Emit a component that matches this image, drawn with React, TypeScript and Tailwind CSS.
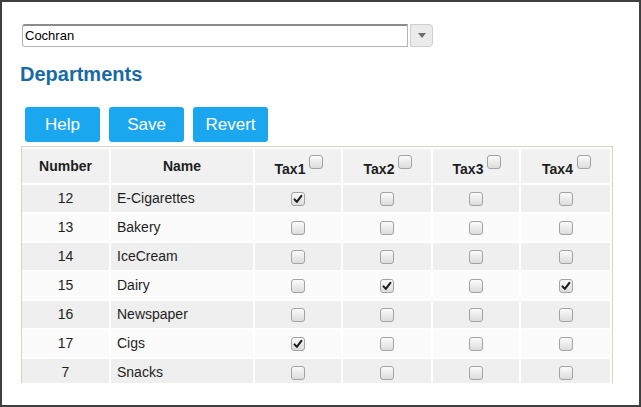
import React from 'react'

type Dept = { num: number; name: string; tax: boolean[] }

const depts: Dept[] = [
    { num: 12, name: 'E-Cigarettes', tax: [true, false, false, false] },
    { num: 13, name: 'Bakery', tax: [false, false, false, false] },
    { num: 14, name: 'IceCream', tax: [false, false, false, false] },
    { num: 15, name: 'Dairy', tax: [false, true, false, true] },
    { num: 16, name: 'Newspaper', tax: [false, false, false, false] },
    { num: 17, name: 'Cigs', tax: [true, false, false, false] },
    { num: 7, name: 'Snacks', tax: [false, false, false, false] },
]

function Check({ checked }: { checked?: boolean }) {
    return (
        <span className="inline-flex w-[14px] h-[14px] shrink-0 items-center justify-center rounded-[3px] border border-[#a3a3a3] bg-gradient-to-b from-[#fbfbfb] to-[#dcdcdc]">
            {checked && (
                <svg width="10" height="10" viewBox="0 0 10 10">
                    <path d="M1.5 5.4 L3.8 7.9 L8.4 1.8" fill="none" stroke="#1e1e1e" strokeWidth="2.1" strokeLinecap="round" strokeLinejoin="round" />
                </svg>
            )}
        </span>
    )
}

export default function App() {
    return (
        <div
            className="w-[641px] h-[407px] border-2 border-[#3f3f3f] bg-white overflow-hidden flex flex-col pl-[18px] text-[#1e1e1e]"
            style={{ fontFamily: '"Liberation Sans", Arial, sans-serif' }}
        >
            {/* store picker */}
            <div className="mt-[22px] ml-[2px] flex items-stretch h-[23px]">
                <div className="w-[386px] border border-[#b4b4b4] border-t-[2px] border-t-[#8c8c8c] rounded-l-[3px] bg-white flex items-center pl-[2px] text-[13px] text-black">
                    Cochran
                </div>
                <div className="ml-[2px] w-[23px] rounded-r-[4px] border border-[#cfcfcf] bg-[#ebebeb] flex items-center justify-center">
                    <svg width="8" height="5" viewBox="0 0 8 5">
                        <path d="M0 0 L8 0 L4 5 Z" fill="#6d6d6d" />
                    </svg>
                </div>
            </div>

            <h1 className="mt-[16px] text-[20px] leading-[23px] font-bold text-[#186aa3]">Departments</h1>

            <div className="mt-[21px] ml-[5px] flex gap-[9px]">
                {['Help', 'Save', 'Revert'].map((b) => (
                    <button
                        key={b}
                        className="w-[75px] h-[35px] rounded-[3px] bg-[#1ba7ef] text-white text-[17px]"
                    >
                        {b}
                    </button>
                ))}
            </div>

            {/* departments table */}
            <div className="mt-[4px] ml-[1px] w-[592px] h-[237px] overflow-hidden border border-b-0 border-[#d7d4c3] pt-[2px]">
                <div className="grid grid-cols-[87px_142px_86px_88px_86px_89px] gap-[2px] text-[14px]">
                    <div className="h-[34px] bg-[#f1f1f1] flex items-center justify-center font-bold">Number</div>
                    <div className="h-[34px] bg-[#f1f1f1] flex items-center justify-center font-bold">Name</div>
                    {['Tax1', 'Tax2', 'Tax3', 'Tax4'].map((t) => (
                        <div key={t} className="h-[34px] bg-[#f1f1f1] flex justify-center items-start pt-[5px] pl-[2px]">
                            <span className="mt-[7px] font-bold leading-[16px]">{t}</span>
                            <span className="ml-[4px]">
                                <Check />
                            </span>
                        </div>
                    ))}

                    {depts.map((d, i) => {
                        const bg = i % 2 === 0 ? 'bg-[#efefef]' : 'bg-[#fbfbfb]'
                        return (
                            <React.Fragment key={d.num}>
                                <div className={`h-[27px] ${bg} flex items-center justify-center`}>{d.num}</div>
                                <div className={`h-[27px] ${bg} flex items-center pl-[6px]`}>{d.name}</div>
                                {d.tax.map((c, j) => (
                                    <div key={j} className={`h-[27px] ${bg} flex items-center justify-center`}>
                                        <Check checked={c} />
                                    </div>
                                ))}
                            </React.Fragment>
                        )
                    })}
                </div>
            </div>
        </div>
    )
}
